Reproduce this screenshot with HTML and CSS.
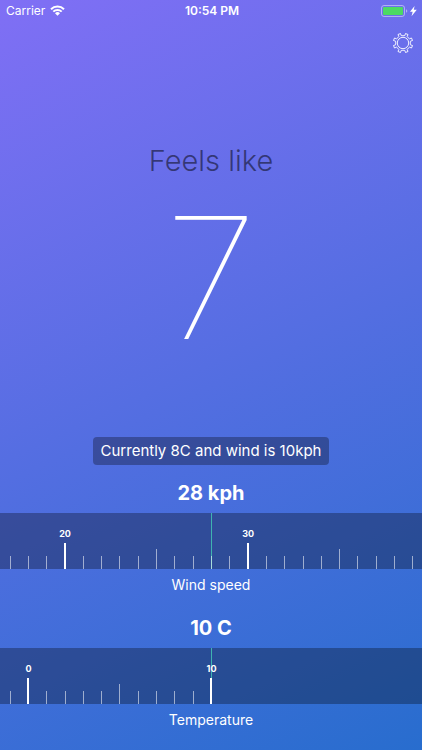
FILE: index.html
```html
<!DOCTYPE html>
<html lang="en">
<head>
    <meta charset="utf-8">
    <meta name="viewport" content="width=device-width, initial-scale=1">
    <title>Feels like</title>
    <link rel="stylesheet" href="styles.css">
</head>
<body>
    <!-- Status bar -->
    <header class="status-bar">
        <div class="status-left">
            <span>Carrier</span>
            <svg width="15" height="11" viewBox="0 0 15 11" fill="none" stroke="#fff" stroke-width="2">
                <path d="M1 4.2a9.2 9.2 0 0 1 13 0M3.3 6.6a6 6 0 0 1 8.4 0"/>
                <path d="M7.5 10.8L5 8.2a3.6 3.6 0 0 1 5 0z" fill="#fff" stroke="none"/>
            </svg>
        </div>
        <time class="status-time">10:54 PM</time>
        <div class="status-right">
            <svg width="37" height="12" viewBox="0 0 37 12">
                <rect x="0.5" y="0.5" width="23" height="11" rx="2.5" fill="none" stroke="#fff" stroke-opacity="0.45"/>
                <rect x="2" y="2" width="20" height="8" rx="1" fill="#4cd964"/>
                <path d="M25 4.2c1.8.5 1.8 3 0 3.5z" fill="#fff" fill-opacity="0.45"/>
                <path d="M33.6 1L29 6.8h2.7L30.5 11.2l5.3-6.4h-3z" fill="#fff"/>
            </svg>
        </div>
    </header>

    <nav class="toolbar">
        <button class="settings-btn" type="button" aria-label="Settings">
            <svg width="22" height="22" viewBox="0 0 22 22" fill="none" stroke="#fff" stroke-opacity="0.9" stroke-linejoin="round">
                <circle cx="11" cy="11" r="5.7"/>
                <path d="M9.2 3.6L8.5 1.5L6 2.5L6.8 4.6Q6 5.8 4.6 6.8L2.5 6L1.5 8.5L3.6 9.2Q3.9 11 3.6 12.8L1.5 13.5L2.5 16L4.6 15.2Q6 16.2 6.8 17.4L6 19.5L8.5 20.5L9.2 18.4Q11 18.1 12.8 18.4L13.5 20.5L16 19.5L15.2 17.4Q16.2 16 17.4 15.2L19.5 16L20.5 13.5L18.4 12.8Q18.1 11 18.4 9.2L20.5 8.5L19.5 6L17.4 6.8Q16 5.8 15.2 4.6L16 2.5L13.5 1.5L12.8 3.6Q11 3.9 9.2 3.6z"/>
            </svg>
        </button>
    </nav>

    <main>
        <section class="feels-like">
            <h1>Feels like</h1>
            <output class="feels-value" for="wind temperature">7</output>
        </section>

        <button class="current-btn" type="button">Currently 8C and wind is 10kph</button>

        <section class="setting">
            <h2>28 kph</h2>
            <div class="ruler">
                <input type="range" id="wind" min="17" max="39" value="28">
                <ul class="ticks">
                    <li></li>
                    <li></li>
                    <li></li>
                    <li class="major">20</li>
                    <li></li>
                    <li></li>
                    <li></li>
                    <li></li>
                    <li class="middle"></li>
                    <li></li>
                    <li></li>
                    <li></li>
                    <li></li>
                    <li class="major">30</li>
                    <li></li>
                    <li></li>
                    <li></li>
                    <li></li>
                    <li class="middle"></li>
                    <li></li>
                    <li></li>
                    <li></li>
                    <li></li>
                </ul>
            </div>
            <label for="wind">Wind speed</label>
        </section>

        <section class="setting">
            <h2>10 C</h2>
            <div class="ruler">
                <input type="range" id="temperature" min="-1" max="21" value="10">
                <!-- The scale stops at 10 -->
                <ul class="ticks">
                    <li></li>
                    <li class="major">0</li>
                    <li></li>
                    <li></li>
                    <li></li>
                    <li></li>
                    <li class="middle"></li>
                    <li></li>
                    <li></li>
                    <li></li>
                    <li></li>
                    <li class="major">10</li>
                </ul>
            </div>
            <label for="temperature">Temperature</label>
        </section>
    </main>
</body>
</html>
```
FILE: styles.css
```css
* {
    margin: 0;
    padding: 0;
    box-sizing: border-box;
}

body {
    min-height: 100vh;
    display: flex;
    flex-direction: column;
    background: linear-gradient(155deg, #806ff5 0%, #286dce 100%);
    font-family: Inter, "Liberation Sans", sans-serif;
    color: white;
}

button {
    border: none;
    background: none;
    color: inherit;
    font-family: inherit;
    cursor: pointer;
}

svg {
    display: block;
}

/* Status bar */
.status-bar {
    display: grid;
    grid-template-columns: 1fr auto 1fr;
    align-items: center;
    height: 21px;
    padding: 0 4px 0 6px;
    font-size: 12px;
}

.status-left {
    display: flex;
    align-items: center;
    gap: 5px;
}

.status-time {
    font-weight: 600;
}

.status-right {
    justify-self: end;
}

.toolbar {
    display: flex;
    justify-content: flex-end;
    padding: 11px 8px 0;
}

.settings-btn {
    width: 22px;
    height: 22px;
}

main {
    flex: 1;
    display: flex;
    flex-direction: column;
    align-items: center;
}

/* Result */
.feels-like {
    display: flex;
    flex-direction: column;
    align-items: center;
    padding-top: 89px;
}

.feels-like h1 {
    font-size: 29px;
    font-weight: 300;
    line-height: 36px;
    color: rgba(0, 0, 0, 0.5);
}

.feels-value {
    font-size: 169px;
    font-weight: 100;
    line-height: 198px;
}

.current-btn {
    margin-top: 60px;
    padding: 0 8px;
    border-radius: 4px;
    background: rgba(0, 0, 0, 0.3);
    font-size: 15px;
    line-height: 28px;
}

/* Wind and temperature rulers */
.setting {
    width: 100%;
    padding-top: 16px;
    text-align: center;
}

.setting h2 {
    font-size: 20px;
    font-weight: 700;
    line-height: 24px;
    margin-bottom: 8px;
}

.setting label {
    display: block;
    font-size: 14px;
    line-height: 30px;
    margin-top: 1px;
}

.ruler {
    position: relative;
    height: 56px;
    padding-left: 1px;
    background: rgba(0, 0, 0, 0.3);
}

.ruler input {
    position: absolute;
    inset: 0 0 0 1px;
    width: calc(100% - 1px);
    height: 100%;
    appearance: none;
    background: none;
    cursor: pointer;
}

.ruler input::-webkit-slider-thumb {
    appearance: none;
    width: 1px;
    height: 56px;
    background: #3fb3b0;
}

.ticks {
    position: relative;
    height: 100%;
    display: grid;
    grid-template-columns: repeat(23, minmax(0, 1fr));
    list-style: none;
    pointer-events: none;
}

.ticks li {
    display: flex;
    flex-direction: column;
    justify-content: flex-end;
    align-items: center;
    font-size: 9px;
    font-weight: 700;
    line-height: 12px;
    white-space: nowrap;
}

.ticks li::after {
    content: '';
    width: 1px;
    height: 13px;
    background: rgba(255, 255, 255, 0.55);
}

.ticks .middle::after {
    height: 20px;
}

.ticks .major::after {
    width: 2px;
    height: 26px;
    margin-top: 3px;
    background: white;
}
```
